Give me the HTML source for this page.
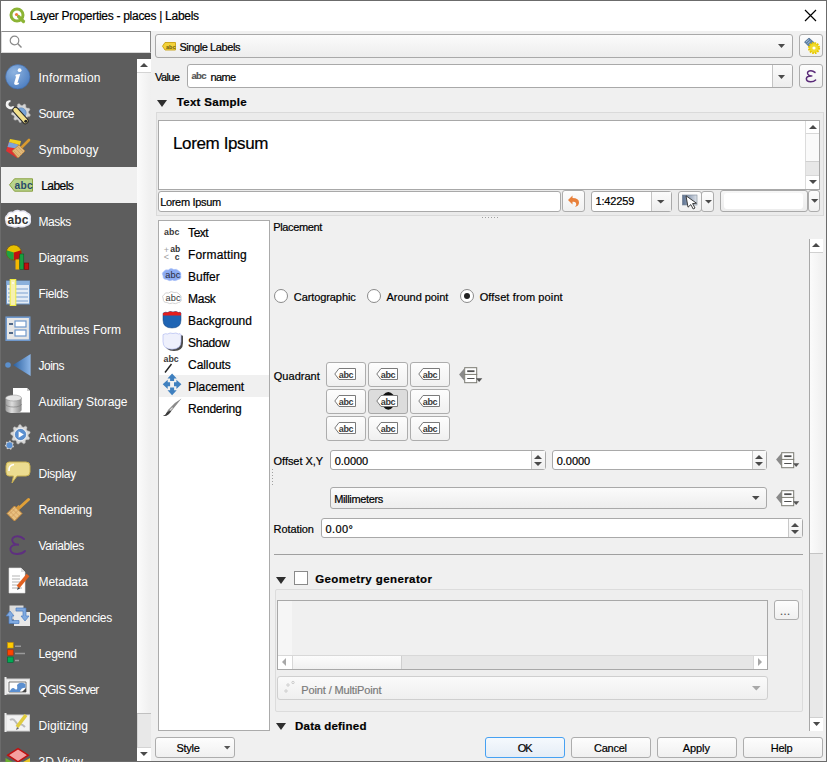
<!DOCTYPE html>
<html><head><meta charset="utf-8">
<style>
*{box-sizing:border-box;margin:0;padding:0}
html,body{width:827px;height:762px;overflow:hidden}
body{position:relative;background:#6b6b6b;font-family:"Liberation Sans",sans-serif;font-size:12px;color:#000}
.a{position:absolute}
.t{position:absolute;white-space:nowrap;line-height:1;-webkit-text-stroke:0.2px currentColor}
.btn{position:absolute;border:1px solid #adadad;border-radius:3px;background:linear-gradient(#fdfdfd,#f0f0f0)}
.field{position:absolute;border:1px solid #a9a9a9;border-radius:2px;background:#fff}
.combo{position:absolute;border:1px solid #a9a9a9;border-radius:3px;background:linear-gradient(#fbfbfb,#ededed)}
.arr{position:absolute;width:0;height:0;border-left:5px solid transparent;border-right:5px solid transparent;border-top:5px solid #505050}
.arru{position:absolute;width:0;height:0;border-left:5px solid transparent;border-right:5px solid transparent;border-bottom:5px solid #505050}
.lb{position:absolute;left:38px;color:#fff;font-size:12.3px;white-space:nowrap;line-height:1}
svg{position:absolute;overflow:visible}
</style></head><body>

<div class="a" style="left:1px;top:1px;width:825px;height:760px;background:#f0f0f0"></div>
<div class="a" style="left:1px;top:1px;width:825px;height:30px;background:#fff"></div>
<svg style="left:9px;top:7px" width="17" height="17" viewBox="0 0 17 17">
  <circle cx="8" cy="8" r="6" fill="none" stroke="#8cb435" stroke-width="3"/>
  <path d="M9.5 9.5 L14.5 14.5" stroke="#8cb435" stroke-width="3.2" stroke-linecap="round"/>
  <circle cx="7.5" cy="7.5" r="1.6" fill="#ee7a3a"/></svg>
<div class="t" style="left:30.00px;top:10px;font-size:12px;letter-spacing:-0.288px">Layer Properties - places | Labels</div>
<svg style="left:804px;top:9px" width="13" height="13" viewBox="0 0 13 13"><path d="M1 1L12 12M12 1L1 12" stroke="#000" stroke-width="1.2"/></svg>
<div class="a" style="left:1px;top:31px;width:150px;height:22px;background:#fff;border:1px solid #8c8c8c;border-left-color:#d8d8d8;border-bottom-color:#d8d8d8"></div>
<svg style="left:9px;top:35px" width="14" height="14" viewBox="0 0 14 14"><circle cx="5.5" cy="5.5" r="4.3" fill="none" stroke="#8a8a8a" stroke-width="1.2"/><path d="M8.6 8.6L12.5 12.5" stroke="#8a8a8a" stroke-width="1.4"/></svg>
<div class="a" style="left:1px;top:53px;width:150px;height:708px;background:#5d5d5d"></div>
<div class="a" style="left:1px;top:167px;width:136px;height:36px;background:#f0f0f0"></div>
<svg style="left:5px;top:64px" width="26" height="26" viewBox="0 0 26 26"><defs><radialGradient id="gi" cx="0.35" cy="0.3" r="0.8"><stop offset="0" stop-color="#8fb4e0"/><stop offset="1" stop-color="#4a7cc0"/></radialGradient></defs>
<circle cx="12.8" cy="12.8" r="12.2" fill="url(#gi)" stroke="#3f6aa8" stroke-width="0.6"/>
<circle cx="14.6" cy="6.2" r="1.9" fill="#fff"/>
<path d="M11 10.5 L15.2 10 L12.6 18.5 Q12.4 19.6 14.2 18.6 L13.6 20.2 Q11 21.6 9.6 20.6 Q8.8 19.8 9.4 18.2 L11.2 12.2 L10 12.3 Z" fill="#fff"/></svg>
<div class="t" style="left:38.50px;top:72px;font-size:12px;letter-spacing:0.200px;color:#fff;-webkit-text-stroke:0">Information</div>
<svg style="left:5px;top:100px" width="26" height="26" viewBox="0 0 26 26"><path d="M23.60,13.00 L25.36,14.65 L24.93,16.25 L22.58,16.80 L21.82,17.89 L22.11,20.28 L20.75,21.23 L18.60,20.14 L17.32,20.48 L16.00,22.50 L14.35,22.36 L13.40,20.14 L12.20,19.58 L9.89,20.28 L8.72,19.11 L9.42,16.80 L8.86,15.60 L6.64,14.65 L6.50,13.00 L8.52,11.68 L8.86,10.40 L7.77,8.25 L8.72,6.89 L11.11,7.18 L12.20,6.42 L12.75,4.07 L14.35,3.64 L16.00,5.40 L17.32,5.52 L19.25,4.07 L20.75,4.77 L20.89,7.18 L21.82,8.11 L24.23,8.25 L24.93,9.75 L23.48,11.68 Z" fill="#d4d4d4" stroke="#b0b0b0" stroke-width="0.5"/>
<circle cx="16" cy="13" r="5.2" fill="#7aa6d8" stroke="#5a86b8" stroke-width="0.6"/>
<path d="M2.5 2.5 Q1 6 4 7.5 Q6 8.5 8 7.5 L12 11.5" stroke="#f2f2f2" stroke-width="2.6" fill="none" stroke-linecap="round"/>
<path d="M1.8 3.5 Q2.5 0.8 5.5 1.2" stroke="#f2f2f2" stroke-width="2" fill="none"/>
<path d="M10.5 10 L20.5 21" stroke="#2a2a2a" stroke-width="6.4" stroke-linecap="round"/>
<path d="M10.5 10 L20.5 21" stroke="#f2e08a" stroke-width="4.4" stroke-linecap="round"/>
<circle cx="20.8" cy="21.3" r="1.5" fill="#222"/></svg>
<div class="t" style="left:38.50px;top:108px;font-size:12px;letter-spacing:-0.400px;color:#fff;-webkit-text-stroke:0">Source</div>
<svg style="left:5px;top:136px" width="26" height="26" viewBox="0 0 26 26"><path d="M1 15 L4 6 L15 9 L12 22 Z" fill="#e03030"/>
<path d="M2.5 11 L4 6 L15 9 L14 13 Z" fill="#7aa4d8"/>
<path d="M4 6 L5 3 L16 5 L15 9 Z" fill="#f0d020"/>
<path d="M16 12 L24 4" stroke="#d89a30" stroke-width="2.6" stroke-linecap="round"/>
<path d="M7 15 L14 9 L20 15 L13 22 Z" fill="#e0b878" stroke="#b8803c" stroke-width="0.8"/>
<path d="M9 15 L15 21 M11 13 L17 19 M13 11 L19 17" stroke="#c8965a" stroke-width="0.6"/></svg>
<div class="t" style="left:38.50px;top:144px;font-size:12px;letter-spacing:0.078px;color:#fff;-webkit-text-stroke:0">Symbology</div>
<svg style="left:5px;top:172px" width="26" height="26" viewBox="0 0 26 26"><path d="M4.5 12.8 L9.5 6.8 L27.5 6.8 L27.5 19.2 L9.5 19.2 Z" fill="#b8d48c" stroke="#8aa040" stroke-width="1"/>
<text x="9.6" y="16.8" font-family="Liberation Sans" font-weight="bold" font-size="10.2" fill="#284a6a" letter-spacing="0.2">abc</text></svg>
<div class="t" style="left:41.25px;top:180px;font-size:12px;letter-spacing:-0.575px;color:#000">Labels</div>
<svg style="left:5px;top:208px" width="26" height="26" viewBox="0 0 26 26"><path d="M2.5 7 Q4 3.5 8 4.5 Q11.5 1 15.5 3.5 Q19.5 2 22 5 Q26.2 6.5 25.2 11 Q26.2 16.5 21.5 17.5 Q17.5 20 13.5 18 Q9.5 20 6 18 Q0.8 18 1 13 Q-0.5 9 2.5 7 Z" fill="#fff" stroke="#e4e4f0" stroke-width="1.4"/>
<text x="2.6" y="15.8" font-family="Liberation Sans" font-size="12" font-weight="bold" fill="#333" letter-spacing="0.1">abc</text></svg>
<div class="t" style="left:38.50px;top:216px;font-size:12px;letter-spacing:-0.469px;color:#fff;-webkit-text-stroke:0">Masks</div>
<svg style="left:5px;top:244px" width="26" height="26" viewBox="0 0 26 26"><circle cx="8.8" cy="8.6" r="7.6" fill="#e8c000"/>
<path d="M8.8 8.6 L8.8 16.2 A7.6 7.6 0 0 1 1.6 6.2 Z" fill="#20a040"/>
<path d="M8.8 8.6 L16 6.2 A7.6 7.6 0 0 1 8.8 16.2 Z" fill="#c01010"/>
<circle cx="8.8" cy="8.6" r="7.6" fill="none" stroke="#5a3a10" stroke-width="0.5"/>
<rect x="10.5" y="15.5" width="4" height="10" fill="#f5b800"/>
<rect x="14.8" y="10" width="4" height="15.5" fill="#18a040" stroke="#0a5020" stroke-width="0.5"/>
<rect x="19.2" y="19" width="4.6" height="6.5" fill="#c01010" stroke="#600" stroke-width="0.5"/></svg>
<div class="t" style="left:38.50px;top:252px;font-size:12px;letter-spacing:-0.196px;color:#fff;-webkit-text-stroke:0">Diagrams</div>
<svg style="left:5px;top:280px" width="26" height="26" viewBox="0 0 26 26"><rect x="1.5" y="1" width="23" height="23" fill="#e4ecf6" stroke="#6c94c4" stroke-width="1"/>
<rect x="1.5" y="1" width="23" height="4" fill="#8ab0dc"/>
<path d="M9 9 H23 M9 13 H23 M9 17 H23 M9 21 H23 M3 9 H5 M3 13 H5 M3 17H5 M3 21H5" stroke="#7aa0d0" stroke-width="1.2"/>
<rect x="5.2" y="-0.5" width="5.6" height="26" fill="#f6f0b0" stroke="#f0ec40" stroke-width="1"/>
<circle cx="8" cy="3" r="0.9" fill="#fff"/></svg>
<div class="t" style="left:38.50px;top:288px;font-size:12px;letter-spacing:-0.400px;color:#fff;-webkit-text-stroke:0">Fields</div>
<svg style="left:5px;top:316px" width="26" height="26" viewBox="0 0 26 26"><rect x="1.2" y="1.2" width="23.5" height="23" fill="#e6e6e6" stroke="#6f98cc" stroke-width="1.6"/>
<rect x="10" y="5" width="11" height="6" fill="#fff" stroke="#6f98cc" stroke-width="1.2"/>
<rect x="10" y="14" width="11" height="6" fill="#fff" stroke="#6f98cc" stroke-width="1.2"/>
<path d="M4 8 H8 M4 17 H8" stroke="#1f3f6a" stroke-width="1.6"/></svg>
<div class="t" style="left:38.50px;top:324px;font-size:12px;letter-spacing:0.036px;color:#fff;-webkit-text-stroke:0">Attributes Form</div>
<svg style="left:5px;top:352px" width="26" height="26" viewBox="0 0 26 26"><defs><linearGradient id="gj" x1="0" x2="1"><stop offset="0" stop-color="#2a5f9e"/><stop offset="1" stop-color="#8cb6e8"/></linearGradient></defs>
<circle cx="3" cy="13" r="2.8" fill="#5b8fcc"/>
<path d="M8 13 L25.6 2 L25.6 24 Z" fill="url(#gj)"/></svg>
<div class="t" style="left:38.50px;top:360px;font-size:12px;letter-spacing:-0.500px;color:#fff;-webkit-text-stroke:0">Joins</div>
<svg style="left:5px;top:388px" width="26" height="26" viewBox="0 0 26 26"><path d="M8 0 L22 0 L25 3 L25 24.6 L8 24.6 Z" fill="#fff"/>
<path d="M22 0 L22 3 L25 3 Z" fill="#ccc"/>
<defs><linearGradient id="gd" x1="0" x2="1"><stop offset="0" stop-color="#9a9a9a"/><stop offset="0.4" stop-color="#dedede"/><stop offset="1" stop-color="#8a8a8a"/></linearGradient></defs>
<path d="M0.5 10 L0.5 22 A8 3 0 0 0 16.6 22 L16.6 10 Z" fill="url(#gd)"/>
<ellipse cx="8.55" cy="10" rx="8" ry="3" fill="#e6e6e6" stroke="#888" stroke-width="0.5"/>
<path d="M0.5 16 A8 3 0 0 0 16.6 16" stroke="#777" stroke-width="0.6" fill="none"/></svg>
<div class="t" style="left:38.50px;top:396px;font-size:12px;letter-spacing:-0.109px;color:#fff;-webkit-text-stroke:0">Auxiliary Storage</div>
<svg style="left:5px;top:424px" width="26" height="26" viewBox="0 0 26 26"><path d="M23.14,12.05 L24.62,14.09 L23.86,15.61 L21.35,15.66 L20.36,16.60 L20.18,19.11 L18.62,19.79 L16.66,18.21 L15.30,18.30 L13.55,20.10 L11.91,19.62 L11.43,17.15 L10.34,16.35 L7.83,16.61 L6.89,15.18 L8.10,12.98 L7.79,11.66 L5.70,10.25 L5.90,8.55 L8.24,7.65 L8.85,6.43 L8.16,4.01 L9.39,2.83 L11.77,3.65 L13.02,3.10 L14.04,0.81 L15.75,0.70 L17.05,2.86 L18.35,3.24 L20.61,2.14 L21.99,3.16 L21.60,5.64 L22.35,6.77 L24.79,7.38 L25.19,9.04 L23.30,10.70 Z" fill="#d8d8d8" stroke="#b8b8b8" stroke-width="0.5"/>
<circle cx="15.5" cy="10.5" r="6.4" fill="#fff"/>
<circle cx="15.5" cy="10.5" r="5.4" fill="#5a8fd0" stroke="#3a6fb0" stroke-width="0.5"/>
<path d="M13.6 7.2 L18.8 10.5 L13.6 13.8 Z" fill="#fff"/>
<path d="M8.10,21.20 L8.98,22.22 L8.64,23.20 L7.31,23.44 L6.74,24.01 L6.50,25.34 L5.52,25.68 L4.50,24.80 L3.70,24.71 L2.50,25.34 L1.63,24.80 L1.69,23.44 L1.26,22.76 L0.02,22.22 L-0.10,21.20 L0.99,20.40 L1.26,19.64 L0.90,18.33 L1.63,17.60 L2.94,17.96 L3.70,17.69 L4.50,16.60 L5.52,16.72 L6.06,17.96 L6.74,18.39 L8.10,18.33 L8.64,19.20 L8.01,20.40 Z" fill="#d0d0d0"/>
<circle cx="4.5" cy="21.2" r="3" fill="#5a8fd0"/></svg>
<div class="t" style="left:38.50px;top:432px;font-size:12px;letter-spacing:0.104px;color:#fff;-webkit-text-stroke:0">Actions</div>
<svg style="left:5px;top:460px" width="26" height="26" viewBox="0 0 26 26"><path d="M4 2 H21 Q25 2 25 6 V12 Q25 16 21 16 H12 L7 23 L8.5 16 H4 Q1 16 1 12 V6 Q1 2 4 2 Z" fill="#ecdc90" stroke="#c8b050" stroke-width="1"/>
<path d="M4 11 Q3.5 5 9 4.5" stroke="#fff" stroke-width="1.6" fill="none"/></svg>
<div class="t" style="left:38.50px;top:468px;font-size:12px;letter-spacing:-0.271px;color:#fff;-webkit-text-stroke:0">Display</div>
<svg style="left:5px;top:496px" width="26" height="26" viewBox="0 0 26 26"><path d="M13 13 L23.5 3.5" stroke="#e0a038" stroke-width="3" stroke-linecap="round"/>
<path d="M2 17.5 L9.5 10 L17 17.5 L9.5 25 Z" fill="#e8c080" stroke="#c88a38" stroke-width="1"/>
<path d="M4.5 15 L12 22.5 M7 12.5 L14.5 20 M3.5 19 L11 11.5 M6 21.5 L13.5 14" stroke="#c89050" stroke-width="0.6"/>
<path d="M11 11.5 L13.5 9 L16 11.5 L13.5 14 Z" fill="#d89838"/></svg>
<div class="t" style="left:38.50px;top:504px;font-size:12px;letter-spacing:-0.203px;color:#fff;-webkit-text-stroke:0">Rendering</div>
<svg style="left:5px;top:532px" width="26" height="26" viewBox="0 0 26 26"><path d="M19 7 Q15 3.2 10 4.6 Q6.2 6 7.6 9.6 Q8.8 12.4 12.6 12.6 M12.6 12.6 Q6 12.6 5.4 16.6 Q5 21.6 12 22 Q17 22.2 20 19" fill="none" stroke="#5e2f80" stroke-width="1.9" stroke-linecap="round"/>
<path d="M12.6 12.6 H14" stroke="#5e2f80" stroke-width="1.6"/></svg>
<div class="t" style="left:38.50px;top:540px;font-size:12px;letter-spacing:-0.422px;color:#fff;-webkit-text-stroke:0">Variables</div>
<svg style="left:5px;top:568px" width="26" height="26" viewBox="0 0 26 26"><path d="M4 0 H16 L20 4 V25 H4 Z" fill="#fff" stroke="#ddd" stroke-width="0.6"/>
<path d="M16 0 V4 H20" fill="#ddd"/>
<path d="M7 8 H15 M7 11 H15 M7 14 H15 M7 17 H15 M7 20 H17" stroke="#aaa" stroke-width="0.9"/>
<path d="M13 19 L23 7" stroke="#e06020" stroke-width="3.6"/>
<path d="M13 19 L12 22 L15 20.5 Z" fill="#444"/></svg>
<div class="t" style="left:38.50px;top:576px;font-size:12px;letter-spacing:-0.104px;color:#fff;-webkit-text-stroke:0">Metadata</div>
<svg style="left:5px;top:604px" width="26" height="26" viewBox="0 0 26 26"><rect x="4.5" y="1.5" width="14" height="14" fill="#dcdcdc"/>
<rect x="9" y="8" width="16" height="14" fill="#e8e8e8"/>
<path d="M11 4 H21 V12 H24 L20 17 L16 12 H18 V7 H11 Z" fill="#80aae0" stroke="#4a7cc0" stroke-width="0.7"/>
<path d="M14 19.5 H4 V12 H1 L5 7 L9 12 H7 V16.5 H14 Z" fill="#80aae0" stroke="#4a7cc0" stroke-width="0.7"/></svg>
<div class="t" style="left:38.50px;top:612px;font-size:12px;letter-spacing:-0.268px;color:#fff;-webkit-text-stroke:0">Dependencies</div>
<svg style="left:5px;top:640px" width="26" height="26" viewBox="0 0 26 26"><rect x="2.6" y="2.6" width="5.6" height="5.4" fill="#ffcc00" stroke="#c89000" stroke-width="0.6"/>
<rect x="2.6" y="9.8" width="5.6" height="5.4" fill="#ff4400" stroke="#b03000" stroke-width="0.6"/>
<rect x="2.6" y="17" width="5.6" height="5.4" fill="#00aa55" stroke="#006633" stroke-width="0.6"/>
<path d="M10 6.2 H16 M10 13.4 H20 M10 20.6 H14" stroke="#9a9a9a" stroke-width="1.5"/></svg>
<div class="t" style="left:38.50px;top:648px;font-size:12px;letter-spacing:-0.300px;color:#fff;-webkit-text-stroke:0">Legend</div>
<svg style="left:5px;top:676px" width="26" height="26" viewBox="0 0 26 26"><rect x="1" y="3" width="23.5" height="15" fill="#f2f2f2" stroke="#d0d0d0"/>
<path d="M0.5 1 V19" stroke="#ececec" stroke-width="2"/>
<path d="M4 6 H21 V16 H4 Z" fill="#fff" stroke="#555" stroke-width="0.8"/>
<path d="M4.5 16 Q7 10 10 13 Q13 15 12 9 Q15 5 20.5 8 V12 Q17 11 15 15 V16 Z" fill="#5b8fd0"/>
<path d="M17 16 L21 12 L21 16 Z" fill="#444"/></svg>
<div class="t" style="left:38.50px;top:684px;font-size:12px;letter-spacing:-0.792px;color:#fff;-webkit-text-stroke:0">QGIS Server</div>
<svg style="left:5px;top:712px" width="26" height="26" viewBox="0 0 26 26"><rect x="1" y="3" width="23.5" height="16" fill="#f2f2f2" stroke="#d0d0d0"/>
<path d="M0.5 1 V20" stroke="#ececec" stroke-width="2"/>
<path d="M5 8 Q8 6 10 9 L13 13 Q16 11 20 15" stroke="#bbb" stroke-width="2" fill="none"/>
<path d="M12 15 L21 3" stroke="#e0cc40" stroke-width="3.6"/>
<path d="M12 15 L11 18 L14 16.5 Z" fill="#666"/></svg>
<div class="t" style="left:38.50px;top:720px;font-size:12px;letter-spacing:0.086px;color:#fff;-webkit-text-stroke:0">Digitizing</div>
<svg style="left:5px;top:748px" width="26" height="26" viewBox="0 0 26 26"><path d="M0.5 10 L13 17 L13 24 L0.5 24 Z" fill="#6cb030"/><path d="M13 17 L25 10 L25 24 L13 24 Z" fill="#e8c828"/>
<path d="M2.8 7.2 L13 0.6 L23.2 7.2 L13 13.8 Z" fill="#f4a0a0" stroke="#c01010" stroke-width="1.5"/></svg>
<div class="t" style="left:38.50px;top:756px;font-size:12px;color:#fff;-webkit-text-stroke:0">3D View</div>
<div class="a" style="left:137px;top:59px;width:14px;height:702px;background:#e8e8e8;border-left:1px solid #d4d4d4"></div>
<div class="a" style="left:137px;top:59px;width:14px;height:14px;background:#fff;border-bottom:1px solid #d4d4d4"></div>
<svg style="left:140px;top:63px" width="8" height="4" viewBox="0 0 8 4"><polygon points="0,4 8,4 4.0,0" fill="#4a4a4a"/></svg>
<div class="a" style="left:137px;top:73px;width:14px;height:641px;background:linear-gradient(90deg,#fbfbfb,#efefef);border-bottom:1px solid #c0c0c0"></div>
<div class="a" style="left:137px;top:747px;width:14px;height:14px;background:#fff;border-top:1px solid #d4d4d4"></div>
<svg style="left:140.4px;top:751.8px" width="7.8" height="4" viewBox="0 0 7.8 4"><polygon points="0,0 7.8,0 3.9,4" fill="#4a4a4a"/></svg>
<div class="combo" style="left:155px;top:34px;width:638px;height:24px"></div>
<svg style="left:162px;top:42px" width="15" height="9" viewBox="0 0 15 9"><path d="M0.5 4.2 L3 0.5 H13.5 V8 H3 Z" fill="#f3d23a" stroke="#c8a010" stroke-width="0.9"/><text x="4" y="6.6" font-family="Liberation Sans" font-size="5.5" font-weight="bold" fill="#6a5a10">abc</text></svg>
<div class="t" style="left:179.40px;top:42px;font-size:11px;letter-spacing:-0.417px">Single Labels</div>
<svg style="left:778.4px;top:44px" width="7" height="4" viewBox="0 0 7 4"><polygon points="0,0 7,0 3.5,4" fill="#4a4a4a"/></svg>
<div class="btn" style="left:799px;top:34px;width:24px;height:23px"></div>
<svg style="left:803px;top:37px" width="18" height="18" viewBox="0 0 18 18">
<path d="M1.5 5 L6 1 L11 5.5 L6.5 10 Z" fill="#5a80a8" stroke="#3a5a80" stroke-width="0.6"/>
<path d="M3 5 L6 2.5 M4.5 6.5 L7.5 4" stroke="#cde" stroke-width="0.7"/>
<circle cx="11" cy="11" r="5" fill="#f0dc30" stroke="#e8c800" stroke-width="2.2" stroke-dasharray="1.6 1"/>
<circle cx="11" cy="11" r="1.6" fill="#fff"/></svg>
<div class="t" style="left:155.00px;top:72px;font-size:11px;letter-spacing:-0.594px">Value</div>
<div class="a" style="left:187px;top:64px;width:606px;height:24px;border:1px solid #a9a9a9;border-radius:3px;background:#fff"></div>
<div class="a" style="left:772px;top:65px;width:20px;height:22px;border-left:1px solid #c4c4c4;background:linear-gradient(#fbfbfb,#ededed);border-radius:0 2px 2px 0"></div>
<svg style="left:778.4px;top:74.5px" width="7" height="4" viewBox="0 0 7 4"><polygon points="0,0 7,0 3.5,4" fill="#4a4a4a"/></svg>
<div class="t" style="left:191.50px;top:71px;font-size:9.5px;letter-spacing:-0.688px;font-weight:bold;color:#555">abc</div>
<div class="t" style="left:210.60px;top:72px;font-size:11px;letter-spacing:-0.700px">name</div>
<div class="btn" style="left:799px;top:64px;width:24px;height:24px"></div>
<svg style="left:802.5px;top:67.5px" width="16" height="16" viewBox="0 0 16 16"><g transform="scale(0.63)"><path d="M19 7 Q15 3.2 10 4.6 Q6.2 6 7.6 9.6 Q8.8 12.4 12.6 12.6 M12.6 12.6 Q6 12.6 5.4 16.6 Q5 21.6 12 22 Q17 22.2 20 19" fill="none" stroke="#5a2a78" stroke-width="2.4" stroke-linecap="round"/><path d="M12 12.6 H15" stroke="#5a2a78" stroke-width="1.8"/></g></svg>
<div class="a" style="left:157px;top:100px;width:0;height:0;border-left:5.5px solid transparent;border-right:5.5px solid transparent;border-top:7px solid #2e2e2e"></div>
<div class="t" style="left:176.70px;top:97px;font-size:11.5px;letter-spacing:0.312px;font-weight:bold">Text Sample</div>
<div class="a" style="left:156px;top:112px;width:668px;height:104px;border:1px solid #dadada;background:#ebebeb"></div>
<div class="a" style="left:158px;top:120px;width:662px;height:70px;border:1px solid #a8a8a8;background:#fff"></div>
<div class="t" style="left:173.00px;top:135px;font-size:17px;letter-spacing:-0.375px">Lorem Ipsum</div>
<div class="a" style="left:805px;top:121px;width:14px;height:68px;background:#e8e8e8;border-left:1px solid #dcdcdc"></div>
<div class="a" style="left:805px;top:121px;width:14px;height:13px;background:#fff;border-left:1px solid #dcdcdc;border-bottom:1px solid #d8d8d8"></div>
<svg style="left:808.5px;top:125px" width="8" height="4" viewBox="0 0 8 4"><polygon points="0,4 8,4 4.0,0" fill="#4a4a4a"/></svg>
<div class="a" style="left:805px;top:134px;width:14px;height:28px;background:#fafafa;border-left:1px solid #dcdcdc;border-bottom:1px solid #d0d0d0"></div>
<div class="a" style="left:805px;top:175px;width:14px;height:14px;background:#fff;border-left:1px solid #dcdcdc;border-top:1px solid #d8d8d8"></div>
<svg style="left:808.5px;top:180px" width="8" height="4" viewBox="0 0 8 4"><polygon points="0,0 8,0 4.0,4" fill="#4a4a4a"/></svg>
<div class="field" style="left:158px;top:191px;width:403px;height:21px;border-radius:3px"></div>
<div class="t" style="left:160.20px;top:197px;font-size:11px;letter-spacing:-0.325px">Lorem Ipsum</div>
<div class="btn" style="left:562px;top:190px;width:23px;height:22px"></div>
<svg style="left:566px;top:194px" width="15" height="14" viewBox="0 0 15 14"><path d="M2 6 L6.5 1.5 L6.5 4 Q13 4 13 8.5 Q13 12 9 13 Q11 11 10 9 Q9 7.5 6.5 7.8 L6.5 10.5 Z" fill="#e8803a"/></svg>
<div class="field" style="left:591px;top:191px;width:81px;height:21px;border-radius:3px"></div>
<div class="a" style="left:651px;top:192px;width:20px;height:19px;border-left:1px solid #c4c4c4;background:linear-gradient(#fbfbfb,#ededed)"></div>
<svg style="left:657px;top:199.5px" width="7.5" height="3.6" viewBox="0 0 7.5 3.6"><polygon points="0,0 7.5,0 3.75,3.6" fill="#4a4a4a"/></svg>
<div class="t" style="left:595.40px;top:196px;font-size:11px;letter-spacing:-0.125px">1:42259</div>
<div class="btn" style="left:678px;top:191px;width:24px;height:21px"></div>
<div class="btn" style="left:701px;top:191px;width:13px;height:21px"></div>
<svg style="left:704.6px;top:199.5px" width="7" height="3.6" viewBox="0 0 7 3.6"><polygon points="0,0 7,0 3.5,3.6" fill="#4a4a4a"/></svg>
<svg style="left:681px;top:193px" width="18" height="18" viewBox="0 0 18 18"><defs><linearGradient id="gt" x1="0" x2="1"><stop offset="0" stop-color="#5a7090"/><stop offset="1" stop-color="#dde2ea"/></linearGradient></defs><rect x="1.3" y="2" width="14.7" height="10" fill="url(#gt)" stroke="#7a8594" stroke-width="0.6"/><path d="M5 2.8 L15.5 10.2 L11.6 10.6 L14 15 L12.2 16 L9.8 11.6 L7 14.2 Z" fill="#fff" stroke="#2a2a2a" stroke-width="0.9" stroke-linejoin="round"/></svg>
<div class="a" style="left:720px;top:190px;width:88px;height:22px;border:1px solid #a9a9a9;border-radius:3px;background:linear-gradient(#f6f6f6,#ececec)"></div>
<div class="a" style="left:724px;top:193px;width:79px;height:16px;background:#fff;border-radius:3px"></div>
<div class="btn" style="left:808px;top:190px;width:12px;height:22px"></div>
<svg style="left:810.6px;top:199.2px" width="7.4" height="3.8" viewBox="0 0 7.4 3.8"><polygon points="0,0 7.4,0 3.7,3.8" fill="#4a4a4a"/></svg>
<div class="a" style="left:482px;top:217px;width:16px;height:1px;background:repeating-linear-gradient(90deg,#a0a0a0 0 1px,transparent 1px 3px)"></div>
<div class="a" style="left:272px;top:469px;width:1px;height:16px;background:repeating-linear-gradient(180deg,#a0a0a0 0 1px,transparent 1px 3px)"></div>
<div class="a" style="left:158px;top:220px;width:112px;height:511px;border:1px solid #ababab;background:#fff"></div>
<div class="a" style="left:159px;top:375px;width:110px;height:22px;background:#f0f0f0"></div>
<svg style="left:164px;top:223px" width="18" height="18" viewBox="0 0 18 18"><text x="0" y="12" font-family="Liberation Sans" font-weight="bold" font-size="8.8" fill="#3a3a3a" letter-spacing="0.1">abc</text></svg>
<div class="t" style="left:188.10px;top:227px;font-size:12px;letter-spacing:-0.467px">Text</div>
<svg style="left:164px;top:245px" width="18" height="18" viewBox="0 0 18 18"><text x="-0.3" y="7.6" font-family="Liberation Sans" font-size="9" fill="#a0a0a0">+</text><text x="6.3" y="7.4" font-family="Liberation Sans" font-weight="bold" font-size="8.6" fill="#333">ab</text>
<text x="-0.3" y="15" font-family="Liberation Sans" font-size="9" fill="#a0a0a0">&lt;</text><text x="10.8" y="14.8" font-family="Liberation Sans" font-weight="bold" font-size="8.6" fill="#333">c</text></svg>
<div class="t" style="left:188.10px;top:249px;font-size:12px;letter-spacing:0.136px">Formatting</div>
<svg style="left:164px;top:267px" width="18" height="18" viewBox="0 0 18 18"><g transform="translate(-1.7,0)"><path d="M1.5 4.5 Q3 2 6 3 Q8.5 0.5 11.5 2.5 Q14.5 1.5 16.5 4 Q19.5 5.5 18.5 8.5 Q19.5 12 16 12.5 Q13 14.5 10 13 Q7 14.5 4.5 12.5 Q0.5 12.5 0.8 9 Q-1 6 1.5 4.5 Z" fill="#8cacf4" stroke="#a8c0f8" stroke-width="0.6"/><text x="3" y="11" font-family="Liberation Sans" font-size="9.2" fill="#2a2a3a" letter-spacing="0.1">abc</text></g></svg>
<div class="t" style="left:188.10px;top:271px;font-size:12px;letter-spacing:-0.030px">Buffer</div>
<svg style="left:164px;top:289px" width="18" height="18" viewBox="0 0 18 18"><g transform="translate(-1.5,1)"><path d="M1.5 4.5 Q3 2 6 3 Q8.5 0.5 11.5 2.5 Q14.5 1.5 16.5 4 Q19.5 5.5 18.5 8.5 Q19.5 12 16 12.5 Q13 14.5 10 13 Q7 14.5 4.5 12.5 Q0.5 12.5 0.8 9 Q-1 6 1.5 4.5 Z" fill="#fff" stroke="#c8c8c8" stroke-width="0.8"/><text x="3" y="10.6" font-family="Liberation Sans" font-size="9.2" fill="#333" letter-spacing="0.1">abc</text></g></svg>
<div class="t" style="left:188.10px;top:293px;font-size:12px;letter-spacing:-0.317px">Mask</div>
<svg style="left:164px;top:311px" width="18" height="18" viewBox="0 0 18 18"><path d="M-1 2.2 Q1.5 0.5 3.5 1.5 Q6 -0.2 9 1 Q12 -0.2 14.5 1.5 Q16.5 0.5 17 2.2 L17 9 Q17 17 8 17 Q-1 17 -1 9 Z" fill="#1e64b4" stroke="#12407a" stroke-width="0.5"/><path d="M-1 2.2 Q1.5 0.5 3.5 1.5 Q6 -0.2 9 1 Q12 -0.2 14.5 1.5 Q16.5 0.5 17 2.2 L17 4.6 L-1 4.6 Z" fill="#e41e1e"/></svg>
<div class="t" style="left:188.10px;top:315px;font-size:12px;letter-spacing:-0.022px">Background</div>
<svg style="left:164px;top:333px" width="18" height="18" viewBox="0 0 18 18"><path d="M1 3.2 Q3.5 1.5 5.5 2.5 Q8 0.8 11 2 Q14 0.8 16.5 2.5 Q18.5 1.5 19 3.2 L19 10 Q19 18 10 18 Q1 18 1 10 Z" fill="#4a4a4a"/><path d="M-1 1.7 Q1.5 0 3.5 1 Q6 -0.7 9 0.5 Q12 -0.7 14.5 1 Q16.5 0 17 1.7 L17 8.5 Q17 16.2 8 16.2 Q-1 16.2 -1 8.5 Z" fill="#eef0fc" stroke="#a8b4f0" stroke-width="0.6"/></svg>
<div class="t" style="left:188.10px;top:337px;font-size:12px;letter-spacing:-0.320px">Shadow</div>
<svg style="left:164px;top:355px" width="18" height="18" viewBox="0 0 18 18"><text x="-0.5" y="7.2" font-family="Liberation Sans" font-weight="bold" font-size="8.8" fill="#3a3a3a">abc</text><path d="M1 17.5 L7.5 9" stroke="#222" stroke-width="1.4"/></svg>
<div class="t" style="left:188.10px;top:359px;font-size:12px;letter-spacing:-0.096px">Callouts</div>
<svg style="left:164px;top:377px" width="18" height="18" viewBox="0 0 18 18"><g transform="translate(-1.3,-3.6)" fill="#3f80bf"><path d="M9.4 0 L14 5 L11.4 5 L11.4 7.6 L7.4 7.6 L7.4 5 L4.8 5 Z"/><path d="M9.4 21.8 L14 16.8 L11.4 16.8 L11.4 14.2 L7.4 14.2 L7.4 16.8 L4.8 16.8 Z"/><path d="M0 10.9 L5 6.3 L5 8.9 L7.4 8.9 L7.4 12.9 L5 12.9 L5 15.5 Z"/><path d="M18.7 10.9 L13.7 6.3 L13.7 8.9 L11.3 8.9 L11.3 12.9 L13.7 12.9 L13.7 15.5 Z"/></g></svg>
<div class="t" style="left:188.10px;top:381px;font-size:12px;letter-spacing:-0.081px">Placement</div>
<svg style="left:164px;top:399px" width="18" height="18" viewBox="0 0 18 18"><path d="M-1 16.8 Q3.5 17.5 6 13.8 L17.5 -0.5 Q10.5 3.5 6.5 8.5 Q3.8 10.5 2.8 13.5 Q2 16 -1 16.8 Z" fill="#8a8a8a"/><path d="M-1 16.8 Q3.5 17.5 6 13.8 L7.2 12 Q4.2 11.5 2.8 13.5 Q2 16 -1 16.8 Z" fill="#3a3a3a"/><path d="M6 11.2 L8.6 8.6" stroke="#e0e0e0" stroke-width="1.1"/></svg>
<div class="t" style="left:188.10px;top:403px;font-size:12px;letter-spacing:-0.234px">Rendering</div>
<div class="t" style="left:273.30px;top:222px;font-size:11px;letter-spacing:-0.375px">Placement</div>
<div class="a" style="left:274px;top:289px;width:14px;height:14px;border-radius:50%;border:1px solid #8a8a8a;background:#fff"></div>
<div class="t" style="left:293.80px;top:292px;font-size:11px;letter-spacing:-0.091px">Cartographic</div>
<div class="a" style="left:367px;top:289px;width:14px;height:14px;border-radius:50%;border:1px solid #8a8a8a;background:#fff"></div>
<div class="t" style="left:386.60px;top:292px;font-size:11px;letter-spacing:-0.061px">Around point</div>
<div class="a" style="left:460px;top:289px;width:14px;height:14px;border-radius:50%;border:1px solid #8a8a8a;background:#fff"></div>
<div class="a" style="left:464px;top:293px;width:6px;height:6px;border-radius:50%;background:#222"></div>
<div class="t" style="left:479.70px;top:292px;font-size:11px;letter-spacing:0.117px">Offset from point</div>
<div class="t" style="left:273.80px;top:371px;font-size:11px;letter-spacing:0.018px">Quadrant</div>
<div class="btn" style="left:326px;top:362px;width:40px;height:25px;"></div>
<svg style="left:334px;top:368px" width="24" height="14" viewBox="0 0 24 14"><path d="M0.8 6 L5 0.5 H21.5 V11.5 H5 Z" fill="#fff" stroke="#7a7a7a" stroke-width="1"/><text x="4.8" y="9.6" font-family="Liberation Sans" font-weight="bold" font-size="9" fill="#3a3a3a" letter-spacing="-0.35">abc</text></svg>
<div class="btn" style="left:368px;top:362px;width:40px;height:25px;"></div>
<svg style="left:376px;top:368px" width="24" height="14" viewBox="0 0 24 14"><path d="M0.8 6 L5 0.5 H21.5 V11.5 H5 Z" fill="#fff" stroke="#7a7a7a" stroke-width="1"/><text x="4.8" y="9.6" font-family="Liberation Sans" font-weight="bold" font-size="9" fill="#3a3a3a" letter-spacing="-0.35">abc</text></svg>
<div class="btn" style="left:410px;top:362px;width:40px;height:25px;"></div>
<svg style="left:418px;top:368px" width="24" height="14" viewBox="0 0 24 14"><path d="M0.8 6 L5 0.5 H21.5 V11.5 H5 Z" fill="#fff" stroke="#7a7a7a" stroke-width="1"/><text x="4.8" y="9.6" font-family="Liberation Sans" font-weight="bold" font-size="9" fill="#3a3a3a" letter-spacing="-0.35">abc</text></svg>
<div class="btn" style="left:326px;top:389px;width:40px;height:25px;"></div>
<svg style="left:334px;top:395px" width="24" height="14" viewBox="0 0 24 14"><path d="M0.8 6 L5 0.5 H21.5 V11.5 H5 Z" fill="#fff" stroke="#7a7a7a" stroke-width="1"/><text x="4.8" y="9.6" font-family="Liberation Sans" font-weight="bold" font-size="9" fill="#3a3a3a" letter-spacing="-0.35">abc</text></svg>
<div class="btn" style="left:368px;top:389px;width:40px;height:25px;background:#dcdcdc;border-color:#a8a8a8"></div>
<svg style="left:376px;top:395px" width="24" height="14" viewBox="0 0 24 14"><ellipse cx="12.3" cy="5.8" rx="6.6" ry="8.9" fill="#111"/><path d="M0.8 6 L5 0.5 H21.5 V11.5 H5 Z" fill="#fff" stroke="#7a7a7a" stroke-width="1"/><text x="4.8" y="9.6" font-family="Liberation Sans" font-weight="bold" font-size="9" fill="#3a3a3a" letter-spacing="-0.35">abc</text></svg>
<div class="btn" style="left:410px;top:389px;width:40px;height:25px;"></div>
<svg style="left:418px;top:395px" width="24" height="14" viewBox="0 0 24 14"><path d="M0.8 6 L5 0.5 H21.5 V11.5 H5 Z" fill="#fff" stroke="#7a7a7a" stroke-width="1"/><text x="4.8" y="9.6" font-family="Liberation Sans" font-weight="bold" font-size="9" fill="#3a3a3a" letter-spacing="-0.35">abc</text></svg>
<div class="btn" style="left:326px;top:416px;width:40px;height:25px;"></div>
<svg style="left:334px;top:422px" width="24" height="14" viewBox="0 0 24 14"><path d="M0.8 6 L5 0.5 H21.5 V11.5 H5 Z" fill="#fff" stroke="#7a7a7a" stroke-width="1"/><text x="4.8" y="9.6" font-family="Liberation Sans" font-weight="bold" font-size="9" fill="#3a3a3a" letter-spacing="-0.35">abc</text></svg>
<div class="btn" style="left:368px;top:416px;width:40px;height:25px;"></div>
<svg style="left:376px;top:422px" width="24" height="14" viewBox="0 0 24 14"><path d="M0.8 6 L5 0.5 H21.5 V11.5 H5 Z" fill="#fff" stroke="#7a7a7a" stroke-width="1"/><text x="4.8" y="9.6" font-family="Liberation Sans" font-weight="bold" font-size="9" fill="#3a3a3a" letter-spacing="-0.35">abc</text></svg>
<div class="btn" style="left:410px;top:416px;width:40px;height:25px;"></div>
<svg style="left:418px;top:422px" width="24" height="14" viewBox="0 0 24 14"><path d="M0.8 6 L5 0.5 H21.5 V11.5 H5 Z" fill="#fff" stroke="#7a7a7a" stroke-width="1"/><text x="4.8" y="9.6" font-family="Liberation Sans" font-weight="bold" font-size="9" fill="#3a3a3a" letter-spacing="-0.35">abc</text></svg>
<svg style="left:459px;top:367px" width="24" height="16" viewBox="0 0 24 16">
<path d="M0.1 7.6 L5.4 1.3 L5.4 14 Z" fill="#8a8a8a"/>
<rect x="5.7" y="0.7" width="12" height="15" fill="#fff" stroke="#7a7a72" stroke-width="1"/>
<path d="M5.2 7.4 H18.2" stroke="#7a7a72" stroke-width="1"/><path d="M8.2 4.2 H15.5" stroke="#505050" stroke-width="1.8"/><path d="M8.2 11.5 H15.5" stroke="#505050" stroke-width="1"/>
<path d="M17 11.2 L23.3 11.2 L20.15 15 Z" fill="#555"/></svg>
<div class="t" style="left:273.60px;top:456px;font-size:11px;letter-spacing:-0.053px">Offset X,Y</div>
<div class="field" style="left:330px;top:450px;width:216px;height:20px;border-radius:3px"></div><div class="a" style="left:531px;top:451px;width:14px;height:18px;border-left:1px solid #c8c8c8;background:linear-gradient(#fbfbfb,#efefef)"></div><svg style="left:534px;top:455px" width="8" height="4" viewBox="0 0 8 4"><polygon points="0,4 8,4 4.0,0" fill="#4a4a4a"/></svg><svg style="left:534px;top:462px" width="8" height="4" viewBox="0 0 8 4"><polygon points="0,0 8,0 4.0,4" fill="#4a4a4a"/></svg>
<div class="t" style="left:334.70px;top:456px;font-size:11px;letter-spacing:-0.025px">0.0000</div>
<div class="field" style="left:552px;top:450px;width:215px;height:20px;border-radius:3px"></div><div class="a" style="left:752px;top:451px;width:14px;height:18px;border-left:1px solid #c8c8c8;background:linear-gradient(#fbfbfb,#efefef)"></div><svg style="left:755px;top:455px" width="8" height="4" viewBox="0 0 8 4"><polygon points="0,4 8,4 4.0,0" fill="#4a4a4a"/></svg><svg style="left:755px;top:462px" width="8" height="4" viewBox="0 0 8 4"><polygon points="0,0 8,0 4.0,4" fill="#4a4a4a"/></svg>
<div class="t" style="left:556.70px;top:456px;font-size:11px;letter-spacing:-0.025px">0.0000</div>
<svg style="left:776px;top:452px" width="24" height="16" viewBox="0 0 24 16">
<path d="M0.1 7.6 L5.4 1.3 L5.4 14 Z" fill="#8a8a8a"/>
<rect x="5.7" y="0.7" width="12" height="15" fill="#fff" stroke="#7a7a72" stroke-width="1"/>
<path d="M5.2 7.4 H18.2" stroke="#7a7a72" stroke-width="1"/><path d="M8.2 4.2 H15.5" stroke="#505050" stroke-width="1.8"/><path d="M8.2 11.5 H15.5" stroke="#505050" stroke-width="1"/>
<path d="M17 11.2 L23.3 11.2 L20.15 15 Z" fill="#555"/></svg>
<div class="combo" style="left:330px;top:487px;width:437px;height:22px"></div>
<div class="t" style="left:334.20px;top:494px;font-size:11px;letter-spacing:-0.350px">Millimeters</div>
<svg style="left:751.7px;top:496px" width="7.6" height="4" viewBox="0 0 7.6 4"><polygon points="0,0 7.6,0 3.8,4" fill="#4a4a4a"/></svg>
<svg style="left:776px;top:490px" width="24" height="16" viewBox="0 0 24 16">
<path d="M0.1 7.6 L5.4 1.3 L5.4 14 Z" fill="#8a8a8a"/>
<rect x="5.7" y="0.7" width="12" height="15" fill="#fff" stroke="#7a7a72" stroke-width="1"/>
<path d="M5.2 7.4 H18.2" stroke="#7a7a72" stroke-width="1"/><path d="M8.2 4.2 H15.5" stroke="#505050" stroke-width="1.8"/><path d="M8.2 11.5 H15.5" stroke="#505050" stroke-width="1"/>
<path d="M17 11.2 L23.3 11.2 L20.15 15 Z" fill="#555"/></svg>
<div class="t" style="left:273.60px;top:524px;font-size:11px;letter-spacing:-0.100px">Rotation</div>
<div class="field" style="left:321px;top:518px;width:482px;height:20px;border-radius:3px"></div><div class="a" style="left:788px;top:519px;width:14px;height:18px;border-left:1px solid #c8c8c8;background:linear-gradient(#fbfbfb,#efefef)"></div><svg style="left:791px;top:523px" width="8" height="4" viewBox="0 0 8 4"><polygon points="0,4 8,4 4.0,0" fill="#4a4a4a"/></svg><svg style="left:791px;top:530px" width="8" height="4" viewBox="0 0 8 4"><polygon points="0,0 8,0 4.0,4" fill="#4a4a4a"/></svg>
<div class="t" style="left:325.40px;top:524px;font-size:11px;letter-spacing:0.412px">0.00°</div>
<div class="a" style="left:274px;top:554px;width:529px;height:1px;background:#a0a0a0"></div>
<div class="a" style="left:276px;top:577px;width:0;height:0;border-left:5.5px solid transparent;border-right:5.5px solid transparent;border-top:7px solid #2e2e2e"></div>
<div class="a" style="left:294px;top:571px;width:14px;height:14px;border:1px solid #8a8a8a;background:#fff"></div>
<div class="t" style="left:315.20px;top:574px;font-size:11.5px;letter-spacing:0.407px;font-weight:bold">Geometry generator</div>
<div class="a" style="left:275px;top:589px;width:528px;height:123px;border:1px solid #dcdcdc;border-radius:2px;background:#eeeeee"></div>
<div class="a" style="left:277px;top:600px;width:491px;height:70px;border:1px solid #a8a8a8;background:#f0f0f0"></div>
<div class="a" style="left:278px;top:601px;width:14px;height:55px;background:#f6f6f6"></div>
<div class="a" style="left:278px;top:655px;width:489px;height:14px;background:#e6e6e6;border-top:1px solid #d8d8d8"></div>
<div class="a" style="left:278px;top:656px;width:14px;height:13px;background:#fff"></div>
<div class="a" style="left:282px;top:658px;width:0;height:0;border-top:4.5px solid transparent;border-bottom:4.5px solid transparent;border-right:4.5px solid #a8a8a8"></div>
<div class="a" style="left:292px;top:656px;width:110px;height:13px;background:linear-gradient(#fcfcfc,#f0f0f0);border-left:1px solid #d8d8d8;border-right:1px solid #cfcfcf"></div>
<div class="a" style="left:753px;top:656px;width:14px;height:13px;background:#fff;border-left:1px solid #d8d8d8"></div>
<div class="a" style="left:758px;top:658px;width:0;height:0;border-top:4.5px solid transparent;border-bottom:4.5px solid transparent;border-left:4.5px solid #a8a8a8"></div>
<div class="btn" style="left:774px;top:600px;width:25px;height:20px"></div>
<div class="t" style="left:780px;top:606px;font-size:11px;color:#555;letter-spacing:0.5px">...</div>
<div class="a" style="left:277px;top:676px;width:491px;height:24px;border:1px solid #cfcfcf;border-radius:3px;background:linear-gradient(#fafafa,#efefef)"></div>
<svg style="left:284px;top:681px" width="12" height="12" viewBox="0 0 12 12"><circle cx="2" cy="10" r="1.2" fill="none" stroke="#bbb" stroke-width="0.7"/><circle cx="4" cy="4" r="1.2" fill="none" stroke="#bbb" stroke-width="0.7"/><circle cx="9" cy="1.5" r="1.2" fill="none" stroke="#bbb" stroke-width="0.7"/></svg>
<div class="t" style="left:301.30px;top:685px;font-size:11px;letter-spacing:-0.129px;color:#7a7a7a">Point / MultiPoint</div>
<svg style="left:751.8px;top:686px" width="8.6" height="4.4" viewBox="0 0 8.6 4.4"><polygon points="0,0 8.6,0 4.3,4.4" fill="#a8a8a8"/></svg>
<div class="a" style="left:276px;top:723px;width:0;height:0;border-left:5.5px solid transparent;border-right:5.5px solid transparent;border-top:7px solid #2e2e2e"></div>
<div class="t" style="left:295.00px;top:721px;font-size:11.5px;letter-spacing:0.218px;font-weight:bold">Data defined</div>
<div class="a" style="left:809px;top:239px;width:14px;height:492px;background:#e8e8e8;border-left:1px solid #a8a8a8"></div>
<div class="a" style="left:810px;top:239px;width:13px;height:14px;background:#fff;border-bottom:1px solid #d0d0d0"></div>
<svg style="left:812px;top:243px" width="8" height="4" viewBox="0 0 8 4"><polygon points="0,4 8,4 4.0,0" fill="#4a4a4a"/></svg>
<div class="a" style="left:810px;top:253px;width:13px;height:301px;background:linear-gradient(90deg,#fbfbfb,#f0f0f0);border-bottom:1px solid #c4c4c4"></div>
<div class="a" style="left:810px;top:717px;width:13px;height:14px;background:#fff;border-top:1px solid #d0d0d0"></div>
<svg style="left:812.5px;top:722px" width="7.2" height="4" viewBox="0 0 7.2 4"><polygon points="0,0 7.2,0 3.6,4" fill="#4a4a4a"/></svg>
<div class="btn" style="left:155px;top:737px;width:80px;height:21px;"></div>
<div class="btn" style="left:485px;top:737px;width:80px;height:21px;border-color:#47a1f2;background:linear-gradient(#f5f9fd,#e5edf6)"></div>
<div class="btn" style="left:571px;top:737px;width:80px;height:21px;"></div>
<div class="btn" style="left:657px;top:737px;width:80px;height:21px;"></div>
<div class="btn" style="left:743px;top:737px;width:80px;height:21px;"></div>
<div class="t" style="left:176.40px;top:743px;font-size:11px;letter-spacing:-0.275px">Style</div>
<svg style="left:223.6px;top:746px" width="6.4" height="3.6" viewBox="0 0 6.4 3.6"><polygon points="0,0 6.4,0 3.2,3.6" fill="#555"/></svg>
<div class="t" style="left:517.80px;top:743px;font-size:11px;letter-spacing:-1.175px">OK</div>
<div class="t" style="left:594.00px;top:743px;font-size:11px;letter-spacing:-0.250px">Cancel</div>
<div class="t" style="left:682.70px;top:743px;font-size:11px;letter-spacing:-0.050px">Apply</div>
<div class="t" style="left:770.80px;top:743px;font-size:11px;letter-spacing:-0.275px">Help</div>
</body></html>
